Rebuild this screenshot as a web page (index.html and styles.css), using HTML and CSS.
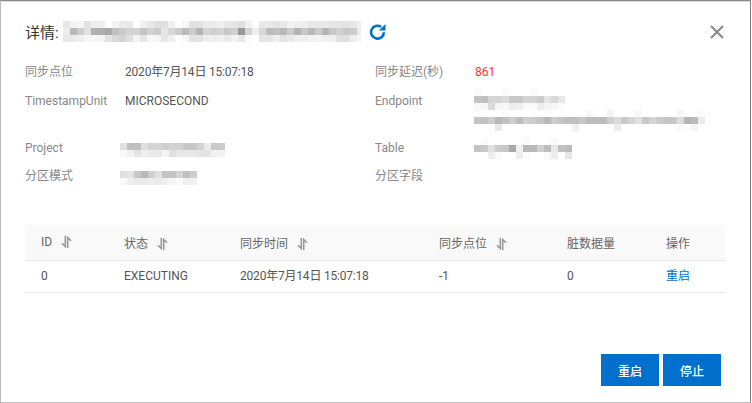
FILE: index.html
```html
<!DOCTYPE html>
<html lang="zh-CN">
<head>
  <meta charset="UTF-8" />
  <meta name="viewport" content="width=device-width, initial-scale=1.0"/>
  <title>详情</title>
  <link rel="stylesheet" href="styles.css">
</head>
<body>
  <div class="dialog">
    <div class="dialog-header">
      <span class="dialog-title">详情:</span>
      <svg class="mosaic" width="298" height="21">
        <rect x="0" y="0" fill="#e8e8e8"/><rect x="7" y="0" fill="#f3f3f3"/><rect x="14" y="0" fill="#f6f6f6"/><rect x="21" y="0" fill="#e2e2e2"/><rect x="28" y="0" fill="#eeeeee"/><rect x="35" y="0" fill="#f0f0f0"/><rect x="49" y="0" fill="#f3f3f3"/><rect x="56" y="0" fill="#eaeaea"/><rect x="63" y="0" fill="#e8e8e8"/><rect x="77" y="0" fill="#f0f0f0"/><rect x="84" y="0" fill="#e8e8e8"/><rect x="91" y="0" fill="#e0e0e0"/><rect x="98" y="0" fill="#e0e0e0"/><rect x="105" y="0" fill="#f0f0f0"/><rect x="119" y="0" fill="#f5f5f5"/><rect x="126" y="0" fill="#e2e2e2"/><rect x="133" y="0" fill="#e2e2e2"/><rect x="140" y="0" fill="#eaeaea"/><rect x="147" y="0" fill="#ececec"/><rect x="154" y="0" fill="#eeeeee"/><rect x="161" y="0" fill="#e8e8e8"/><rect x="168" y="0" fill="#e6e6e6"/><rect x="175" y="0" fill="#e0e0e0"/><rect x="182" y="0" fill="#f0f0f0"/><rect x="196" y="0" fill="#e8e8e8"/><rect x="203" y="0" fill="#eaeaea"/><rect x="210" y="0" fill="#e4e4e4"/><rect x="217" y="0" fill="#e8e8e8"/><rect x="224" y="0" fill="#f2f2f2"/><rect x="231" y="0" fill="#eeeeee"/><rect x="238" y="0" fill="#eeeeee"/><rect x="245" y="0" fill="#e8e8e8"/><rect x="252" y="0" fill="#e8e8e8"/><rect x="259" y="0" fill="#eaeaea"/><rect x="266" y="0" fill="#e6e6e6"/><rect x="273" y="0" fill="#e4e4e4"/><rect x="280" y="0" fill="#e4e4e4"/><rect x="287" y="0" fill="#e8e8e8"/><rect x="294" y="0" fill="#f0f0f0"/>
        <rect x="0" y="7" fill="#eeeeee"/><rect x="7" y="7" fill="#b8b8b8"/><rect x="14" y="7" fill="#cccccc"/><rect x="21" y="7" fill="#e0e0e0"/><rect x="28" y="7" fill="#b0b0b0"/><rect x="35" y="7" fill="#aeaeae"/><rect x="42" y="7" fill="#aaaaaa"/><rect x="49" y="7" fill="#c0c0c0"/><rect x="56" y="7" fill="#cacaca"/><rect x="63" y="7" fill="#d2d2d2"/><rect x="70" y="7" fill="#d2d2d2"/><rect x="77" y="7" fill="#c4c4c4"/><rect x="84" y="7" fill="#d2d2d2"/><rect x="91" y="7" fill="#cbcbcb"/><rect x="98" y="7" fill="#e6e6e6"/><rect x="105" y="7" fill="#d8d8d8"/><rect x="112" y="7" fill="#cccccc"/><rect x="119" y="7" fill="#bbbbbb"/><rect x="126" y="7" fill="#cccccc"/><rect x="133" y="7" fill="#b4b4b4"/><rect x="140" y="7" fill="#d4d4d4"/><rect x="147" y="7" fill="#d0d0d0"/><rect x="154" y="7" fill="#d4d4d4"/><rect x="161" y="7" fill="#c8c8c8"/><rect x="168" y="7" fill="#d0d0d0"/><rect x="175" y="7" fill="#989898"/><rect x="182" y="7" fill="#d4d4d4"/><rect x="189" y="7" fill="#eeeeee"/><rect x="196" y="7" fill="#d8d8d8"/><rect x="203" y="7" fill="#bbbbbb"/><rect x="210" y="7" fill="#c0c0c0"/><rect x="217" y="7" fill="#b8b8b8"/><rect x="224" y="7" fill="#cccccc"/><rect x="231" y="7" fill="#b4b4b4"/><rect x="238" y="7" fill="#c8c8c8"/><rect x="245" y="7" fill="#b8b8b8"/><rect x="252" y="7" fill="#cccccc"/><rect x="259" y="7" fill="#b4b4b4"/><rect x="266" y="7" fill="#c8c8c8"/><rect x="273" y="7" fill="#d0d0d0"/><rect x="280" y="7" fill="#c8c8c8"/><rect x="287" y="7" fill="#cccccc"/><rect x="294" y="7" fill="#ececec"/>
        <rect x="0" y="14" fill="#e8e8e8"/><rect x="7" y="14" fill="#eaeaea"/><rect x="14" y="14" fill="#eeeeee"/><rect x="21" y="14" fill="#f6f6f6"/><rect x="28" y="14" fill="#f6f6f6"/><rect x="35" y="14" fill="#f4f4f4"/><rect x="42" y="14" fill="#e2e2e2"/><rect x="49" y="14" fill="#d8d8d8"/><rect x="56" y="14" fill="#d4d4d4"/><rect x="63" y="14" fill="#e0e0e0"/><rect x="70" y="14" fill="#f4f4f4"/><rect x="77" y="14" fill="#e6e6e6"/><rect x="84" y="14" fill="#f8f8f8"/><rect x="91" y="14" fill="#f6f6f6"/><rect x="98" y="14" fill="#e6e6e6"/><rect x="105" y="14" fill="#eeeeee"/><rect x="119" y="14" fill="#f6f6f6"/><rect x="126" y="14" fill="#e2e2e2"/><rect x="133" y="14" fill="#e4e4e4"/><rect x="140" y="14" fill="#eeeeee"/><rect x="147" y="14" fill="#eeeeee"/><rect x="154" y="14" fill="#f0f0f0"/><rect x="161" y="14" fill="#eaeaea"/><rect x="168" y="14" fill="#f4f4f4"/><rect x="175" y="14" fill="#e8e8e8"/><rect x="182" y="14" fill="#fafafa"/><rect x="196" y="14" fill="#e4e4e4"/><rect x="203" y="14" fill="#e4e4e4"/><rect x="210" y="14" fill="#f0f0f0"/><rect x="217" y="14" fill="#e4e4e4"/><rect x="224" y="14" fill="#eaeaea"/><rect x="231" y="14" fill="#f0f0f0"/><rect x="238" y="14" fill="#f0f0f0"/><rect x="245" y="14" fill="#f2f2f2"/><rect x="252" y="14" fill="#f4f4f4"/><rect x="259" y="14" fill="#f0f0f0"/><rect x="266" y="14" fill="#f0f0f0"/><rect x="273" y="14" fill="#e0e0e0"/><rect x="280" y="14" fill="#e0e0e0"/><rect x="287" y="14" fill="#eeeeee"/><rect x="294" y="14" fill="#f6f6f6"/>
      </svg>
      <svg class="refresh-icon" width="17" height="17" viewBox="0 0 17 17">
        <path d="M14.9 9.2a6.4 6.4 0 1 1-2.8-5.3" fill="none" stroke="#0070cc" stroke-width="2.6"/>
        <path d="M16.5 1v6.6H9.9z" fill="#0070cc"/>
      </svg>
      <svg class="close-icon" width="14" height="14" viewBox="0 0 14 14">
        <path d="M1 1l12 12M13 1L1 13" fill="none" stroke="#888" stroke-width="2"/>
      </svg>
    </div>

    <div class="info">
      <div class="info-label">同步点位</div>
      <div class="info-value date">2020年7月14日 15:07:18</div>
      <div class="info-label">同步延迟(秒)</div>
      <div class="info-value delay">861</div>

      <div class="info-label">TimestampUnit</div>
      <div class="info-value">MICROSECOND</div>
      <div class="info-label">Endpoint</div>
      <div class="info-value">
        <svg class="mosaic endpoint-mosaic" width="231" height="42">
          <rect x="0" y="0" fill="#fafafa"/><rect x="28" y="0" fill="#fafafa"/><rect x="56" y="0" fill="#fafafa"/>
          <rect x="0" y="7" fill="#c4c4c4"/><rect x="7" y="7" fill="#c0c0c0"/><rect x="14" y="7" fill="#d4d4d4"/><rect x="21" y="7" fill="#d4d4d4"/><rect x="28" y="7" fill="#dcdcdc"/><rect x="35" y="7" fill="#c8c8c8"/><rect x="42" y="7" fill="#c8c8c8"/><rect x="49" y="7" fill="#d4d4d4"/><rect x="56" y="7" fill="#d4d4d4"/><rect x="63" y="7" fill="#cccccc"/><rect x="70" y="7" fill="#e4e4e4"/><rect x="77" y="7" fill="#d8d8d8"/><rect x="84" y="7" fill="#e8e8e8"/>
          <rect x="0" y="14" fill="#f8f8f8"/><rect x="7" y="14" fill="#f6f6f6"/><rect x="14" y="14" fill="#dcdcdc"/><rect x="21" y="14" fill="#f6f6f6"/><rect x="28" y="14" fill="#f8f8f8"/><rect x="35" y="14" fill="#ececec"/><rect x="42" y="14" fill="#f0f0f0"/><rect x="49" y="14" fill="#fbfbfb"/><rect x="56" y="14" fill="#fbfbfb"/><rect x="63" y="14" fill="#ececec"/><rect x="70" y="14" fill="#f4f4f4"/><rect x="77" y="14" fill="#f6f6f6"/><rect x="84" y="14" fill="#fcfcfc"/>
          <rect x="0" y="21" fill="#fbfbfb"/><rect x="28" y="21" fill="#fbfbfb"/><rect x="112" y="21" fill="#f8f8f8"/><rect x="133" y="21" fill="#f4f4f4"/><rect x="161" y="21" fill="#f8f8f8"/><rect x="203" y="21" fill="#f6f6f6"/><rect x="224" y="21" fill="#fafafa"/>
          <rect x="0" y="28" fill="#c4c4c4"/><rect x="7" y="28" fill="#c0c0c0"/><rect x="14" y="28" fill="#cccccc"/><rect x="21" y="28" fill="#b8b8b8"/><rect x="28" y="28" fill="#c0c0c0"/><rect x="35" y="28" fill="#cccccc"/><rect x="42" y="28" fill="#bcbcbc"/><rect x="49" y="28" fill="#d0d0d0"/><rect x="56" y="28" fill="#cccccc"/><rect x="63" y="28" fill="#c4c4c4"/><rect x="70" y="28" fill="#b8b8b8"/><rect x="77" y="28" fill="#cccccc"/><rect x="84" y="28" fill="#c4c4c4"/><rect x="91" y="28" fill="#c0c0c0"/><rect x="98" y="28" fill="#c0c0c0"/><rect x="105" y="28" fill="#c8c8c8"/><rect x="112" y="28" fill="#bcbcbc"/><rect x="119" y="28" fill="#bcbcbc"/><rect x="126" y="28" fill="#bcbcbc"/><rect x="133" y="28" fill="#d0d0d0"/><rect x="140" y="28" fill="#dcdcdc"/><rect x="147" y="28" fill="#c8c8c8"/><rect x="154" y="28" fill="#d4d4d4"/><rect x="161" y="28" fill="#e0e0e0"/><rect x="168" y="28" fill="#c8c8c8"/><rect x="175" y="28" fill="#d4d4d4"/><rect x="182" y="28" fill="#cccccc"/><rect x="189" y="28" fill="#c4c4c4"/><rect x="196" y="28" fill="#c8c8c8"/><rect x="203" y="28" fill="#dcdcdc"/><rect x="210" y="28" fill="#b4b4b4"/><rect x="217" y="28" fill="#bcbcbc"/><rect x="224" y="28" fill="#ececec"/>
          <rect x="21" y="35" fill="#e8e8e8"/><rect x="98" y="35" fill="#f0f0f0"/><rect x="140" y="35" fill="#ececec"/><rect x="203" y="35" fill="#fafafa"/><rect x="217" y="35" fill="#f4f4f4"/>
        </svg>
      </div>

      <div class="info-label">Project</div>
      <div class="info-value">
        <svg class="mosaic left-mosaic" width="105" height="14">
          <rect x="0" y="0" fill="#e0e0e0"/><rect x="7" y="0" fill="#c0c0c0"/><rect x="14" y="0" fill="#c0c0c0"/><rect x="21" y="0" fill="#e0e0e0"/><rect x="28" y="0" fill="#d4d4d4"/><rect x="35" y="0" fill="#d4d4d4"/><rect x="42" y="0" fill="#cecece"/><rect x="49" y="0" fill="#d2d2d2"/><rect x="56" y="0" fill="#d2d2d2"/><rect x="63" y="0" fill="#c8c8c8"/><rect x="70" y="0" fill="#c8c8c8"/><rect x="77" y="0" fill="#d4d4d4"/><rect x="84" y="0" fill="#eaeaea"/><rect x="91" y="0" fill="#c8c8c8"/><rect x="98" y="0" fill="#cccccc"/>
          <rect x="0" y="7" fill="#f8f8f8"/><rect x="7" y="7" fill="#f2f2f2"/><rect x="14" y="7" fill="#e4e4e4"/><rect x="21" y="7" fill="#eeeeee"/><rect x="28" y="7" fill="#eaeaea"/><rect x="35" y="7" fill="#e8e8e8"/><rect x="42" y="7" fill="#f4f4f4"/><rect x="49" y="7" fill="#e0e0e0"/><rect x="56" y="7" fill="#e8e8e8"/><rect x="63" y="7" fill="#e8e8e8"/><rect x="70" y="7" fill="#e8e8e8"/><rect x="77" y="7" fill="#e4e4e4"/><rect x="84" y="7" fill="#e4e4e4"/><rect x="91" y="7" fill="#f2f2f2"/><rect x="98" y="7" fill="#f2f2f2"/>
        </svg>
      </div>
      <div class="info-label">Table</div>
      <div class="info-value">
        <svg class="mosaic table-mosaic" width="98" height="21">
          <rect x="7" y="0" fill="#fafafa"/><rect x="49" y="0" fill="#fafafa"/><rect x="77" y="0" fill="#f8f8f8"/>
          <rect x="0" y="7" fill="#c4c4c4"/><rect x="7" y="7" fill="#c8c8c8"/><rect x="14" y="7" fill="#e0e0e0"/><rect x="21" y="7" fill="#cccccc"/><rect x="28" y="7" fill="#c8c8c8"/><rect x="35" y="7" fill="#aaaaaa"/><rect x="42" y="7" fill="#f0f0f0"/><rect x="49" y="7" fill="#b8b8b8"/><rect x="56" y="7" fill="#b8b8b8"/><rect x="63" y="7" fill="#d0d0d0"/><rect x="70" y="7" fill="#bcbcbc"/><rect x="77" y="7" fill="#e8e8e8"/><rect x="84" y="7" fill="#c0c0c0"/><rect x="91" y="7" fill="#bcbcbc"/>
          <rect x="14" y="14" fill="#eeeeee"/><rect x="21" y="14" fill="#fafafa"/><rect x="42" y="14" fill="#eeeeee"/><rect x="49" y="14" fill="#fcfcfc"/><rect x="70" y="14" fill="#fafafa"/><rect x="77" y="14" fill="#eeeeee"/><rect x="91" y="14" fill="#e6e6e6"/>
        </svg>
      </div>

      <div class="info-label">分区模式</div>
      <div class="info-value">
        <svg class="mosaic left-mosaic" width="77" height="14">
          <rect x="0" y="0" fill="#e0e0e0"/><rect x="7" y="0" fill="#e4e4e4"/><rect x="14" y="0" fill="#c8c8c8"/><rect x="21" y="0" fill="#b8b8b8"/><rect x="28" y="0" fill="#d0d0d0"/><rect x="35" y="0" fill="#e0e0e0"/><rect x="42" y="0" fill="#c4c4c4"/><rect x="49" y="0" fill="#c4c4c4"/><rect x="56" y="0" fill="#d4d4d4"/><rect x="63" y="0" fill="#c0c0c0"/><rect x="70" y="0" fill="#cecece"/>
          <rect x="0" y="7" fill="#fafafa"/><rect x="7" y="7" fill="#eeeeee"/><rect x="14" y="7" fill="#eaeaea"/><rect x="21" y="7" fill="#eaeaea"/><rect x="28" y="7" fill="#eeeeee"/><rect x="35" y="7" fill="#eaeaea"/><rect x="42" y="7" fill="#f0f0f0"/><rect x="49" y="7" fill="#f4f4f4"/><rect x="56" y="7" fill="#fafafa"/><rect x="63" y="7" fill="#f0f0f0"/><rect x="70" y="7" fill="#f0f0f0"/>
        </svg>
      </div>
      <div class="info-label">分区字段</div>
      <div class="info-value"></div>
    </div>

    <table class="task-table">
      <colgroup>
        <col class="col-id"><col class="col-status"><col class="col-time"><col class="col-point"><col class="col-dirty"><col>
      </colgroup>
      <thead>
        <tr>
          <th>ID<svg class="sort-icon" width="11" height="12" viewBox="0 0 11 12"><path d="M4.3 0v10.5L1 7.2M6.7 12V1.5L10 4.8" fill="none" stroke="#999" stroke-width="1.6"/></svg></th>
          <th>状态<svg class="sort-icon" width="11" height="12" viewBox="0 0 11 12"><path d="M4.3 0v10.5L1 7.2M6.7 12V1.5L10 4.8" fill="none" stroke="#999" stroke-width="1.6"/></svg></th>
          <th>同步时间<svg class="sort-icon" width="11" height="12" viewBox="0 0 11 12"><path d="M4.3 0v10.5L1 7.2M6.7 12V1.5L10 4.8" fill="none" stroke="#999" stroke-width="1.6"/></svg></th>
          <th>同步点位<svg class="sort-icon" width="11" height="12" viewBox="0 0 11 12"><path d="M4.3 0v10.5L1 7.2M6.7 12V1.5L10 4.8" fill="none" stroke="#999" stroke-width="1.6"/></svg></th>
          <th>脏数据量</th>
          <th>操作</th>
        </tr>
      </thead>
      <tbody>
        <tr>
          <td>0</td>
          <td>EXECUTING</td>
          <td class="date">2020年7月14日 15:07:18</td>
          <td>-1</td>
          <td>0</td>
          <td><a class="link" href="#">重启</a></td>
        </tr>
      </tbody>
    </table>

    <div class="dialog-footer">
      <button>重启</button>
      <button>停止</button>
    </div>
  </div>
</body>
</html>
```

FILE: styles.css
```css
* {
  box-sizing: border-box;
}

body {
  margin: 0;
  background: #fff;
  font-family: Roboto, 'Noto Sans CJK SC', sans-serif;
  font-size: 12px;
  color: #555;
}

.dialog {
  display: flex;
  flex-direction: column;
  width: 751px;
  height: 403px;
  padding: 10px 0 16px 24px;
  border: 1px solid #bbb;
  border-top-color: #8a8a8a;
  border-right-color: #808080;
  box-shadow: inset 0 1px 0 #ddd;
}

.dialog-header {
  display: flex;
  align-items: center;
  width: 700px;
  height: 41px;
  margin-bottom: 10px;
}

.dialog-title {
  width: 38px;
  font-size: 15px;
  color: #333;
}

.mosaic {
  display: block;
}

.mosaic rect {
  width: 7px;
  height: 7px;
}

.refresh-icon {
  margin-left: 8px;
}

.close-icon {
  margin-left: auto;
  margin-right: 1px;
}

.info {
  display: grid;
  grid-template-columns: 100px 250px 100px 250px;
  grid-template-rows: 29px 47px 28px 28px;
  line-height: 20px;
}

.info-label {
  color: #888;
}

.delay {
  color: #f33;
}

.date {
  letter-spacing: -0.2px;
}

.endpoint-mosaic {
  margin: -2px 0 0 -1px;
}

.left-mosaic {
  margin: 5px 0 0 -5px;
}

.table-mosaic {
  margin: 0 0 0 -1px;
}

.task-table {
  width: 700px;
  margin-top: 31px;
  border-collapse: collapse;
  table-layout: fixed;
}

.col-id {
  width: 83px;
}

.col-status {
  width: 116px;
}

.col-time {
  width: 199px;
}

.col-point {
  width: 128px;
}

.col-dirty {
  width: 99px;
}

th {
  height: 35px;
  padding: 0 16px;
  background: #f9f9f9;
  border-bottom: 1px solid #e8e8e8;
  font-weight: normal;
  text-align: left;
  color: #666;
}

td {
  height: 32px;
  padding: 5px 16px 0;
  border-bottom: 1px solid #e8e8e8;
  line-height: 20px;
  vertical-align: baseline;
}

.sort-icon {
  margin-left: 9px;
  vertical-align: -2px;
}

.link {
  color: #0070cc;
  text-decoration: none;
}

.dialog-footer {
  display: flex;
  justify-content: flex-end;
  gap: 4px;
  width: 700px;
  margin-top: auto;
  padding-right: 4px;
}

button {
  width: 58px;
  height: 32px;
  padding: 0;
  border: none;
  background: #0070cc;
  color: #fff;
  font-family: inherit;
  font-size: 12px;
  font-weight: 500;
}
```
